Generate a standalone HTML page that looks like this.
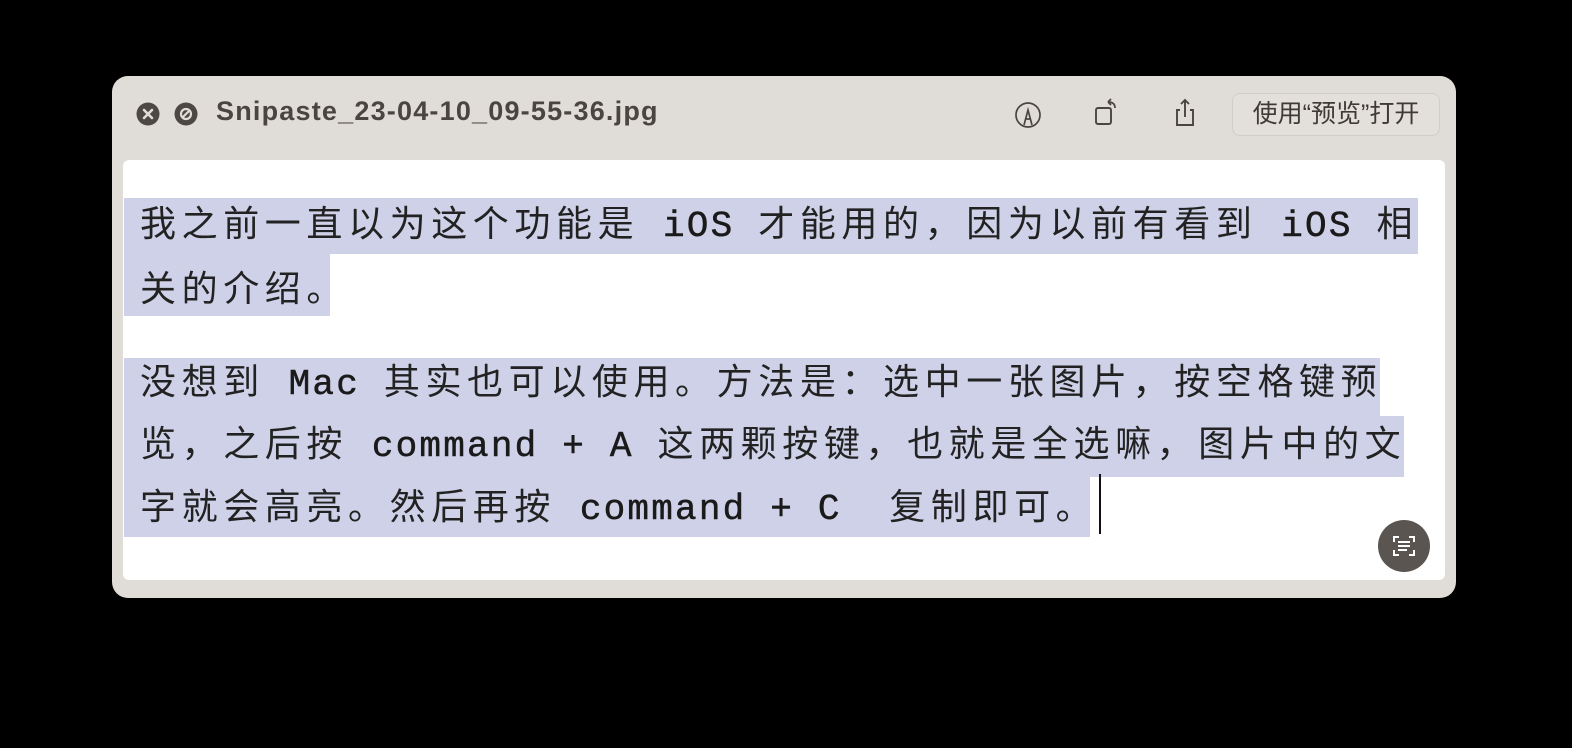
<html><head><style>
body{margin:0;background:#000;width:1572px;height:748px;position:relative;overflow:hidden;font-family:"Liberation Sans","Noto Sans CJK SC",sans-serif}
.win{position:absolute;left:112px;top:76px;width:1344px;height:522px;background:#e0dcd7;border-radius:16px}
.content{position:absolute;left:123px;top:160px;width:1322px;height:420px;background:#fff;border-radius:6px}
.hl{position:absolute;background:#cfd1e8}
.ln{position:absolute;left:140px;font-size:36px;color:#222;white-space:pre;line-height:44px;font-family:"Liberation Mono","Noto Sans CJK SC",monospace}
.c{letter-spacing:5.6px}
.l{letter-spacing:2.2px;color:#1a1a1a;-webkit-text-stroke:0.5px #1a1a1a}
</style></head><body>
<div class="win">
<svg style="position:absolute;left:24px;top:26px" width="24" height="24"><circle cx="12" cy="12" r="11.5" fill="#4d4844"/><path d="M8 8L16 16M16 8L8 16" stroke="#e0dcd7" stroke-width="2.6" stroke-linecap="round"/></svg>
<svg style="position:absolute;left:62px;top:26px" width="24" height="24"><circle cx="12" cy="12" r="11.5" fill="#4d4844"/><circle cx="12" cy="12" r="5" fill="none" stroke="#e0dcd7" stroke-width="2.2"/><path d="M8 16L16 8" stroke="#e0dcd7" stroke-width="2.2"/></svg>
<div style="position:absolute;left:104px;top:20px;font-size:27px;font-weight:bold;color:#4a4540;letter-spacing:1.2px">Snipaste_23-04-10_09-55-36.jpg</div>
<svg style="position:absolute;left:900px;top:23px" width="32" height="32"><circle cx="16" cy="16" r="12" fill="none" stroke="#4a4540" stroke-width="1.7"/><path d="M12 26L16 11L20 26M13.3 20H18.7" fill="none" stroke="#4a4540" stroke-width="1.7"/></svg>
<svg style="position:absolute;left:980px;top:20px" width="32" height="32"><rect x="4" y="12" width="15" height="16" rx="2" fill="none" stroke="#4a4540" stroke-width="1.9"/><path d="M16 6Q23 6 23 12M16 6L19 3M16 6L19 9" fill="none" stroke="#4a4540" stroke-width="1.7"/></svg>
<div style="position:absolute;left:1058px;top:20px"><svg width="32" height="32"><path d="M10 14H7V29H23V14H20M15 4V21M11 8L15 4L19 8" fill="none" stroke="#4a4540" stroke-width="1.9"/></svg></div>
<div style="position:absolute;left:1120px;top:17px;width:206px;height:41px;border:1px solid #d2cdc7;border-radius:8px;background:#e3dfda;font-size:25px;color:#3f3a36;text-align:center;line-height:41px">使用“预览”打开</div>
</div>
<div class="content"></div>
<div class="hl" style="left:124px;top:198px;width:1294px;height:56px"></div>
<div class="hl" style="left:124px;top:254px;width:206px;height:62px"></div>
<div class="hl" style="left:124px;top:358px;width:1256px;height:58px"></div>
<div class="hl" style="left:124px;top:416px;width:1280px;height:61px"></div>
<div class="hl" style="left:124px;top:477px;width:966px;height:60px"></div>
<div class="ln" style="top:205px"><span class="c">我之前一直以为这个功能是</span><span class="l"> iOS </span><span class="c">才能用的，因为以前有看到</span><span class="l"> iOS </span><span class="c">相</span></div>
<div class="ln" style="top:270px"><span class="c">关的介绍。</span></div>
<div class="ln" style="top:363px"><span class="c">没想到</span><span class="l"> Mac </span><span class="c">其实也可以使用。方法是：选中一张图片，按空格键预</span></div>
<div class="ln" style="top:425px"><span class="c">览，之后按</span><span class="l"> command + A </span><span class="c">这两颗按键，也就是全选嘛，图片中的文</span></div>
<div class="ln" style="top:488px"><span class="c">字就会高亮。然后再按</span><span class="l"> command + C  </span><span class="c">复制即可。</span></div>
<div style="position:absolute;left:1099px;top:474px;width:2px;height:60px;background:#111"></div>
<svg style="position:absolute;left:1378px;top:520px" width="52" height="52"><circle cx="26" cy="26" r="26" fill="#5a5550"/><path d="M16 22V17H21M31 17H36V22M36 30V35H31M21 35H16V30M20 22H32M20 26H32M20 30H29" fill="none" stroke="#fff" stroke-width="2"/></svg>
</body></html>
